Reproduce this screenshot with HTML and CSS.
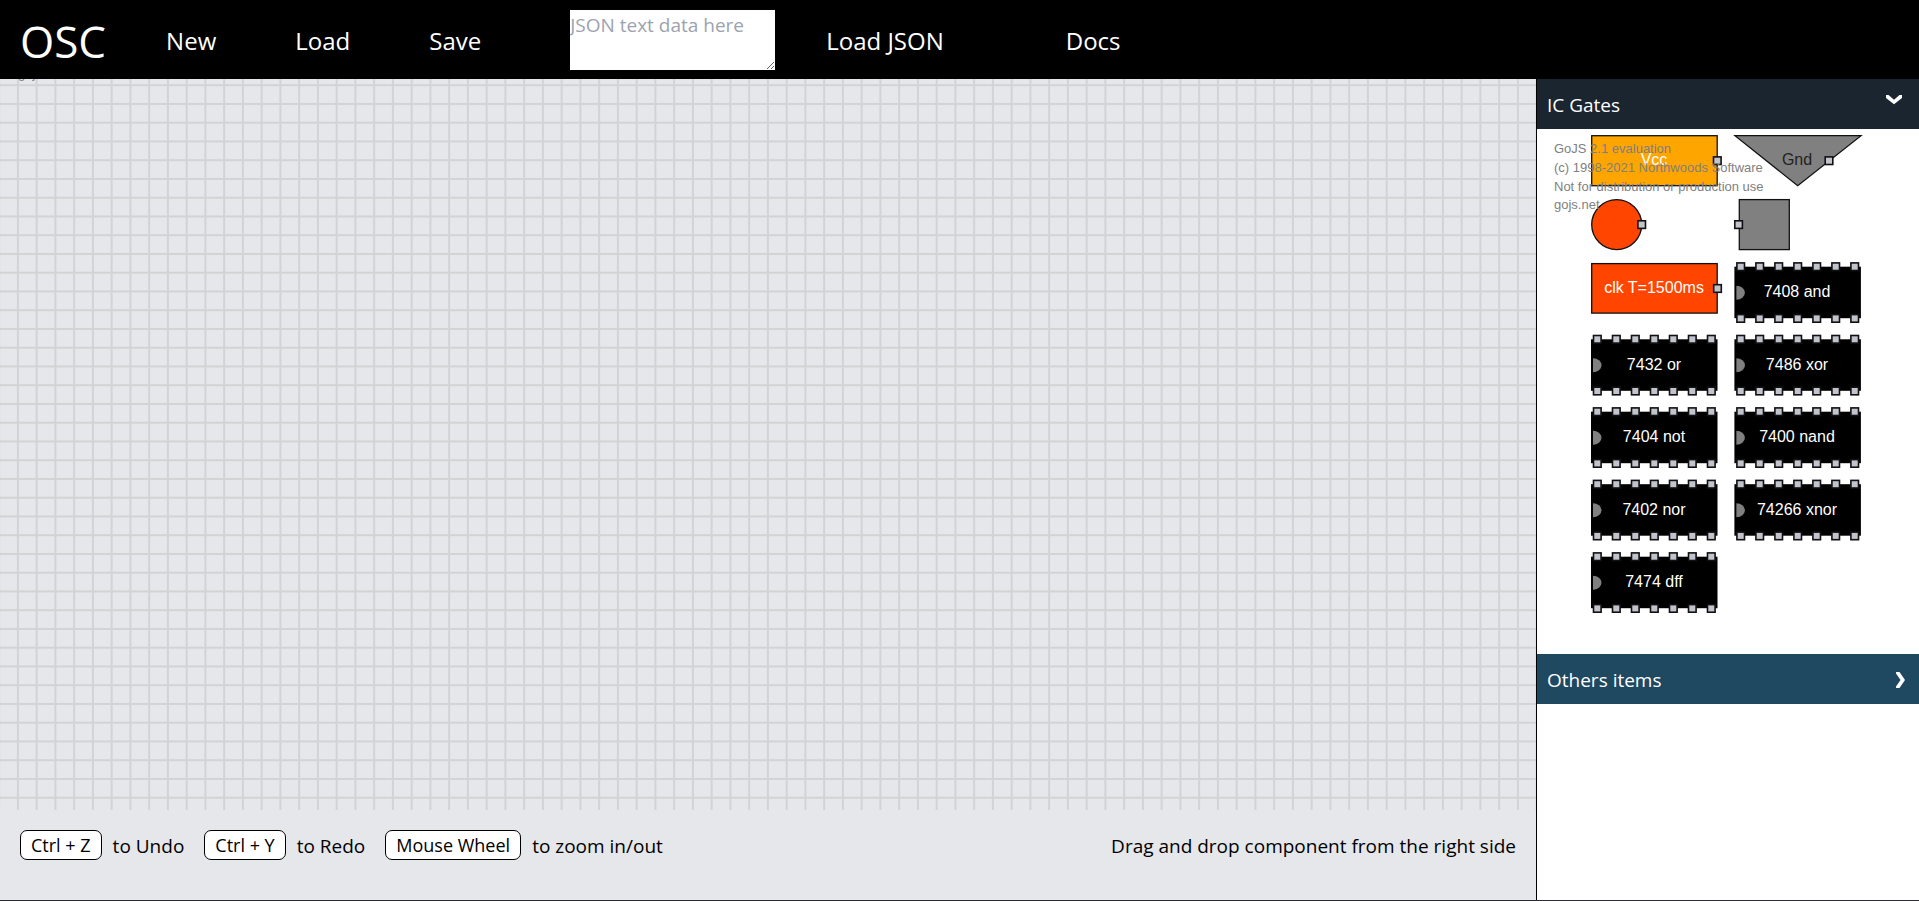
FILE: index.html
```html
<!DOCTYPE html>
<html lang="en">
<head>
<meta charset="utf-8">
<title>OSC</title>
<link rel="stylesheet" href="styles.css">
</head>
<body>
<header class="topbar">
  <h1 class="brand">OSC</h1>
  <nav class="menu">
    <button class="menu-item" type="button">New</button>
    <button class="menu-item" type="button">Load</button>
    <button class="menu-item" type="button">Save</button>
    <textarea class="json-input" aria-label="JSON text data" placeholder="JSON text data here"></textarea>
    <button class="menu-item load-json" type="button">Load JSON</button>
    <a class="menu-item docs" href="#docs">Docs</a>
  </nav>
</header>
<div class="workspace">
  <main class="board">
    <svg class="grid" aria-hidden="true">
      <defs>
        <pattern id="cells" x="17.9" y="6.2" width="18.75" height="18.75" patternUnits="userSpaceOnUse">
          <path d="M0 0H18.75M0 18.75H18.75M0 0V18.75M18.75 0V18.75" stroke="#d3d3d3" stroke-width="1.9"/>
        </pattern>
      </defs>
      <rect width="100%" height="100%" fill="url(#cells)"/>
      <text class="watermark" x="18" y="-1">gojs.net</text>
    </svg>
    <footer class="hints">
      <ul class="shortcuts">
        <li class="shortcut"><kbd class="key">Ctrl + Z</kbd><span class="hint-text">to Undo</span></li>
        <li class="shortcut"><kbd class="key">Ctrl + Y</kbd><span class="hint-text">to Redo</span></li>
        <li class="shortcut"><kbd class="key">Mouse Wheel</kbd><span class="hint-text">to zoom in/out</span></li>
      </ul>
      <p class="tip hint-text">Drag and drop component from the right side</p>
    </footer>
  </main>
  <aside class="sidebar">
    <button class="section section-open" type="button" aria-expanded="true">
      <span>IC Gates</span>
      <svg class="chevron chevron-down" viewBox="0 0 18 18" aria-hidden="true"><path d="M1 5H3.500L9 9.800L14.500 5H17V8L9 14.200L1 8Z"/></svg>
    </button>
    <svg class="palette" viewBox="0 0 382 525" role="img" aria-label="IC gate palette">
      <defs>
        <rect id="port" x="-3.800" y="-3.800" width="7.600" height="7.600" fill="#c1c4cc" stroke="#111" stroke-width="1.600"/>
        <g id="pins">
          <use href="#port" x="6.300"/><use href="#port" x="25.300"/><use href="#port" x="44.300"/><use href="#port" x="63.300"/><use href="#port" x="82.300"/><use href="#port" x="101.300"/><use href="#port" x="120.300"/>
        </g>
        <g id="chip">
          <rect width="126.500" height="51.500"/>
          <path d="M2 19A8.500 7 0 0 1 2 33Z" fill="#808080"/>
          <use href="#pins"/><use href="#pins" y="51.700"/>
        </g>
      </defs>
      <g stroke="#111" stroke-width="1.300">
        <rect x="54.700" y="6.700" width="125.500" height="50" fill="#ffa500"/>
        <path d="M198 6.700H324L260.700 56.700Z" fill="#808080"/>
        <circle cx="79.700" cy="95.600" r="25" fill="#ff4500"/>
        <rect x="202.300" y="70.600" width="50" height="50" fill="#808080"/>
        <rect x="54.700" y="134.600" width="125.500" height="49.500" fill="#ff4500"/>
      </g>
      <use href="#port" x="180.300" y="31.700"/>
      <use href="#port" x="292" y="31.700"/>
      <use href="#port" x="104.700" y="95.600"/>
      <use href="#port" x="201.600" y="95.600"/>
      <use href="#port" x="180.500" y="159.500"/>
      <use href="#chip" x="197.400" y="137.700"/>
      <use href="#chip" x="54" y="210.300"/><use href="#chip" x="197.400" y="210.300"/>
      <use href="#chip" x="54" y="282.700"/><use href="#chip" x="197.400" y="282.700"/>
      <use href="#chip" x="54" y="355.200"/><use href="#chip" x="197.400" y="355.200"/>
      <use href="#chip" x="54" y="427.700"/>
      <g class="part-name">
        <text x="117" y="36">Vcc</text>
        <text class="dark" x="260" y="36">Gnd</text>
        <text x="117" y="164">clk T=1500ms</text>
        <text x="260" y="168">7408 and</text>
        <text x="117" y="241">7432 or</text><text x="260" y="241">7486 xor</text>
        <text x="117" y="313">7404 not</text><text x="260" y="313">7400 nand</text>
        <text x="117" y="386">7402 nor</text><text x="260" y="386">74266 xnor</text>
        <text x="117" y="458">7474 dff</text>
      </g>
      <g class="watermark">
        <text x="17" y="24">GoJS 2.1 evaluation</text>
        <text x="17" y="43">(c) 1998-2021 Northwoods Software</text>
        <text x="17" y="62">Not for distribution or production use</text>
        <text x="17" y="80">gojs.net</text>
      </g>
    </svg>
    <button class="section" type="button" aria-expanded="false">
      <span>Others items</span>
      <svg class="chevron" viewBox="0 0 18 18" aria-hidden="true"><path d="M5 1H8.500L14 9L8.500 17H5V15.500L9.500 9L5 2.500Z"/></svg>
    </button>
  </aside>
</div>
</body>
</html>
```
FILE: styles.css
```css
* {
  box-sizing: border-box;
}

body {
  margin: 0;
  height: 100vh;
  display: flex;
  flex-direction: column;
  border-bottom: 1px solid #2b2b33;
  background: #e5e7eb;
  color: #000;
  font: 19px/30px "Open Sans", "Noto Sans", sans-serif;
}

button,
textarea {
  margin: 0;
  border: 0;
  font: inherit;
}

.topbar {
  display: flex;
  align-items: center;
  height: 79px;
  padding: 2px 20px 0;
  background: #000;
  color: #fff;
}

.brand {
  margin: 0 60px 0 0;
  font-size: 44px;
  font-weight: 400;
  line-height: 50px;
}

.menu {
  display: flex;
  align-items: center;
  gap: 79px;
}

.menu-item {
  padding: 0;
  background: none;
  color: inherit;
  font-size: 24px;
  line-height: 36px;
  text-decoration: none;
  white-space: nowrap;
}

.json-input {
  width: 205px;
  height: 60px;
  margin: 0 -28px 2px 10px;
  padding: 0;
  background: #fff;
  color: #000;
  resize: both;
}

.json-input::placeholder {
  color: #9ca3af;
}

.docs {
  margin-left: 43px;
}

.workspace {
  flex: 1;
  min-height: 0;
  display: grid;
  grid-template-columns: 1fr 383px;
}

.board {
  display: flex;
  flex-direction: column;
  min-width: 0;
}

.grid {
  flex: 1;
  width: 100%;
  min-height: 0;
  overflow: hidden;
}

.hints {
  display: flex;
  justify-content: space-between;
  padding: 20px 20px 40px;
}

.shortcuts {
  display: flex;
  gap: 20px;
  margin: 0;
  padding: 0;
  list-style: none;
}

.shortcut {
  display: flex;
  gap: 11px;
}

.key {
  padding: 0 10px;
  border: 1px solid #000;
  border-radius: 7px;
  background: #fff;
  font-family: inherit;
  font-size: 18px;
  line-height: 28px;
}

.hint-text {
  line-height: 32px;
  height: 30px;
}

.tip {
  margin: 0;
}

.sidebar {
  border-left: 1px solid #000;
  background: #fff;
}

.section {
  display: flex;
  align-items: center;
  justify-content: space-between;
  width: 100%;
  height: 50px;
  padding: 2px 10px 0;
  background: #1f4861;
  color: #fff;
}

.section-open {
  background: #1b252f;
}

.chevron {
  width: 18px;
  height: 18px;
  fill: currentColor;
}

.chevron-down {
  align-self: flex-start;
  margin: 9px 6px 0 0;
}

.palette {
  display: block;
  width: 100%;
}

.part-name {
  fill: #fff;
  font: 16px "Liberation Sans", Arial, sans-serif;
  text-anchor: middle;
}

.dark {
  fill: #222;
}

.watermark {
  fill: #808080;
  font: 13px "Liberation Sans", Arial, sans-serif;
}
```
